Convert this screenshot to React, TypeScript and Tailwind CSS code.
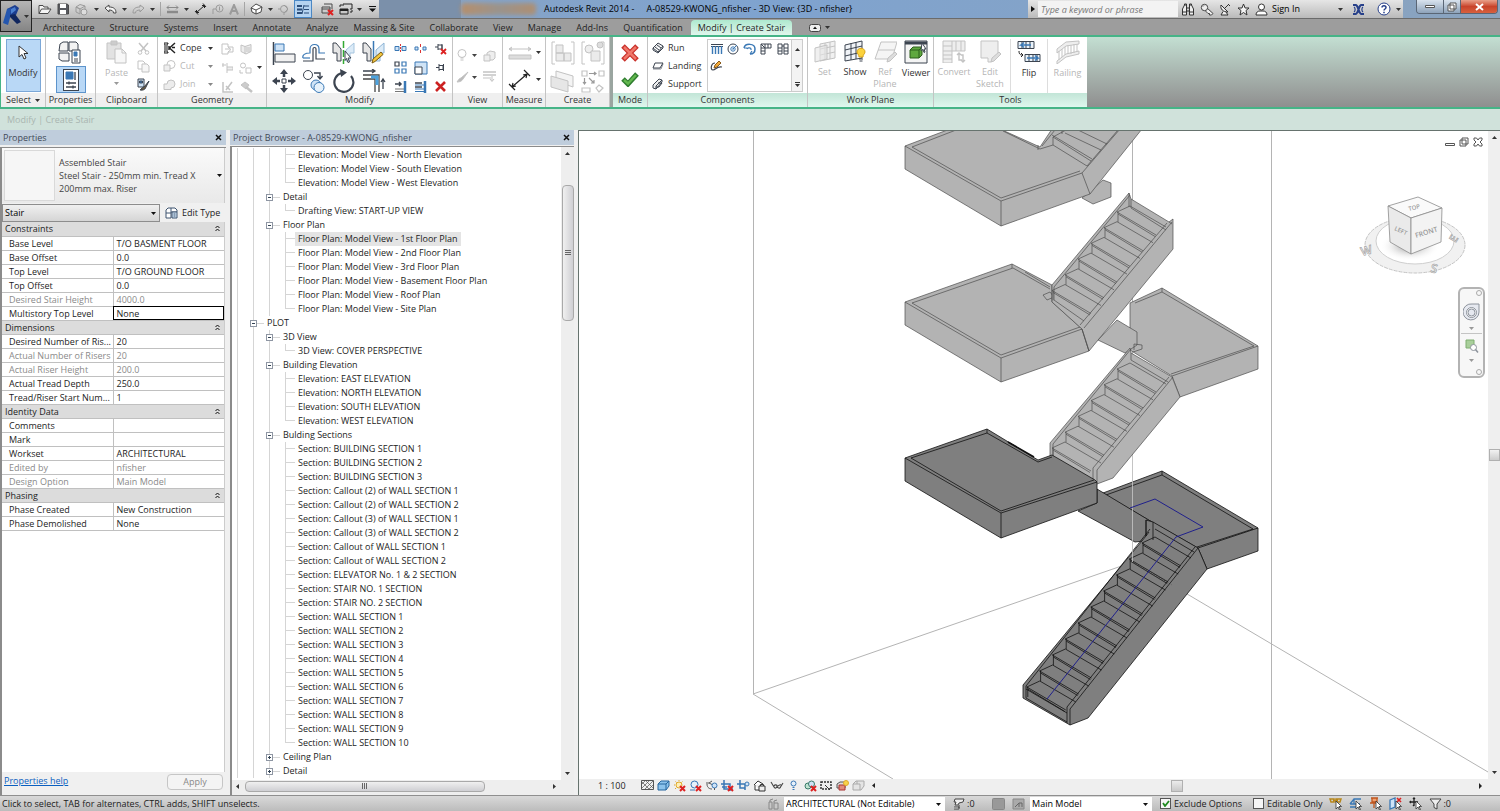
import { Fragment, useState } from "react";
import type { ReactNode } from "react";
import clsx from "clsx";

const INK = "#3c4450";
const GHOST = "#c3c3c3";
const BLUE = "#3a78b5";

type IcoProps = { w: number; h: number; c?: string; sw?: number; children: ReactNode };

function Ico({ w, h, c = INK, sw = 1, children }: IcoProps) {
  return (
    <svg width={w} height={h} viewBox={`0 0 ${w} ${h}`} fill="none" stroke={c} strokeWidth={sw} className="shrink-0" aria-hidden="true">
      {children}
    </svg>
  );
}

function Caret({ c = "#333" }: { c?: string }) {
  return (
    <Ico w={5} h={3} c="none">
      <path d="M0 0h5L2.5 3z" fill={c} />
    </Ico>
  );
}

function IconButton({ label, className, children }: { label: string; className?: string; children: ReactNode }) {
  return (
    <button type="button" aria-label={label} className={clsx("flex items-center justify-center", className)}>
      {children}
    </button>
  );
}

/* ---------- quick access toolbar ---------- */

const dark = "#4a4a4a";
const pale = "#9b9b9b";

function QuickAccess() {
  return (
    <div className="flex h-[18px] items-center gap-[5px] bg-gradient-to-b from-[#e6e6e6] to-[#b9b9b9] pl-[6px] pr-[3px]">
      <IconButton label="Open">
        <Ico w={14} h={11} c={dark}><path d="M1 9.500V1.500h4l1 1.500h4v2M1 9.500l2.500-4.500H13l-3 4.500z" fill="#f4f4f4" /></Ico>
      </IconButton>
      <IconButton label="Save">
        <Ico w={13} h={12} c={dark}><path d="M1 1h9l1.500 1v9H1z" fill="#57595e" /><path d="M3 1h6v4H3zM3 7h6v4H3z" fill="#fff" stroke="none" /></Ico>
      </IconButton>
      <IconButton label="Synchronize" className="gap-[5px]">
        <Ico w={14} h={13} c={pale}><path d="M1 4l4-2.500 5 1.500v3M1 4v5l4 2V6zl4 2 5-3" /><circle cx="9" cy="9" r="3" fill="#ddd" /></Ico>
        <Caret />
      </IconButton>
      <IconButton label="Undo" className="gap-[5px]">
        <Ico w={13} h={10} c={dark}><path d="M1 4l4-3v2c5 0 7 2 7 6H9.500c0-2-1.500-3-4.500-3v2z" fill="#f2f2f2" /></Ico>
        <Caret />
      </IconButton>
      <IconButton label="Redo" className="gap-[5px]">
        <Ico w={13} h={10} c={pale}><path d="M12 4L8 1v2C3 3 1 5 1 9h2.500C3.500 7 5 6 8 6v2z" /></Ico>
        <Caret />
      </IconButton>
      <span className="h-[14px] w-px bg-[#a5a5a5]" />
      <IconButton label="Measure between references" className="gap-[5px]">
        <Ico w={13} h={9} c="#8a8a8a"><path d="M1 2.500h11M3 .5l-2 2 2 2M10 .5l2 2-2 2" /><path d="M1 7h11" strokeWidth="2.500" /></Ico>
        <Caret />
      </IconButton>
      <IconButton label="Aligned dimension">
        <Ico w={13} h={12} c="#222"><path d="M2.500 9.500l8-7M1 8l3 3.500M9 .5L12 4M2.500 9.500V7M2.500 9.500H5M10.500 2.500H8M10.500 2.500V5" /></Ico>
      </IconButton>
      <IconButton label="Tag by category">
        <Ico w={12} h={11} c={pale}><path d="M1 10V5h3" /><circle cx="7.500" cy="4.500" r="3.500" /><path d="M7.500 2.500v4" /></Ico>
      </IconButton>
      <IconButton label="Text">
        <Ico w={10} h={11} c={pale} sw={2}><path d="M1 10.500L5 1l4 9.500M2.500 7h5" /></Ico>
      </IconButton>
      <span className="h-[14px] w-px bg-[#a5a5a5]" />
      <IconButton label="Default 3D view" className="gap-[5px]">
        <Ico w={13} h={12} c={dark}><path d="M1 5l5-4 6 3-1 5-5 2-4-2z" fill="#fff" /><path d="M1 5l5 2 6-3M6 7v4" /></Ico>
        <Caret />
      </IconButton>
      <IconButton label="Section">
        <Ico w={11} h={11} c={pale}><circle cx="6" cy="5" r="3.500" /><path d="M6 1l4 4-4 4v2M0 5h2" /></Ico>
      </IconButton>
      <IconButton label="Thin lines" className="h-[18px] w-[18px] border border-[#4a87c4] bg-[#b5d3f0]">
        <Ico w={12} h={11} c="#2b4d78"><path d="M0 2h5M0 5.500h5M0 9h5" strokeWidth="2" /><path d="M7 2h5M7 5.500h5M7 9h5M7 1l-2 9" /></Ico>
      </IconButton>
      <IconButton label="Close hidden windows" className="ml-[4px]">
        <Ico w={13} h={13} c={dark}><path d="M3 1h8v5M1 4h8v6H1zM1 6h8" /><path d="M7 7l5 5M12 7l-5 5" stroke="#d22" strokeWidth="2" /></Ico>
      </IconButton>
      <IconButton label="Switch windows" className="gap-[4px]">
        <Ico w={14} h={12} c="#222"><path d="M4 3V1h9v5h-2M1 6h8v5H1zM1 4V2h2M11 9h2V7" /><path d="M1 7h8" strokeWidth="2" /></Ico>
        <Caret />
      </IconButton>
      <IconButton label="Customize quick access toolbar" className="ml-[2px]">
        <Ico w={7} h={7} c="#111"><path d="M0 .5h7" /><path d="M0 2.500h7L3.500 6z" fill="#111" stroke="none" /></Ico>
      </IconButton>
    </div>
  );
}

function TitleBar() {
  return (
    <div className="flex h-[19px] items-start border-b border-[#6b6b6b] bg-gradient-to-r from-[#8fa4bb] via-[#7fa3cf] to-[#8aa3be]">
      <QuickAccess />
      <div className="h-[18px] w-[82px] bg-[#7b90aa]" />
      <div className="h-[12px] w-[75px] self-center rounded bg-gradient-to-r from-[#b58f6c] via-[#9a938c] to-[#ad8f73] blur-[2px]" />
      <h1 className="flex flex-1 items-center gap-3 self-center whitespace-nowrap pl-2 font-normal text-black">
        <span>Autodesk Revit 2014 -</span>
        <span>A-08529-KWONG_nfisher - 3D View: {"{3D - nfisher}"}</span>
      </h1>
      <div className="flex h-[18px] items-center bg-gradient-to-b from-[#e6e6e6] to-[#bababa]">
        <IconButton label="Collapse search" className="w-[10px]">
          <Ico w={4} h={6} c="none"><path d="M0 0v6l4-3z" fill="#111" /></Ico>
        </IconButton>
        <input
          type="text"
          aria-label="Search help"
          placeholder="Type a keyword or phrase"
          className="h-[16px] w-[140px] bg-[#f3f3f3] px-[3px] italic placeholder:text-[#777]"
        />
        <div className="flex items-center gap-[5px] pl-[3px]">
          <IconButton label="Search">
            <Ico w={14} h={13} c="#333"><path d="M1.500 12V6l2-4h2v10zM8.500 12V2h2l2 4v6zM5.500 5h3M5.500 8h3M1.500 9h4M8.500 9h4M3.500 2V1h2v1M8.500 2V1h2v1" fill="#eee" /></Ico>
          </IconButton>
          <IconButton label="Subscription center">
            <Ico w={14} h={13} c="#444"><path d="M6 4l7 6.500-1.500 1.500h-2V10.500H8L4.500 7" fill="#eee" /><circle cx="4.500" cy="4.500" r="3.200" fill="#eee" /><path d="M3 3.500l1-1" /></Ico>
          </IconButton>
          <IconButton label="Communication center">
            <Ico w={13} h={13} c="#333"><path d="M2 2c-1 4 2 7 7 7zM5.500 5.500L9 2M9 1l2 2M4 8.500L2 12h7L7 9" fill="#eee" /></Ico>
          </IconButton>
          <IconButton label="Favorites">
            <Ico w={13} h={13} c="#333"><path d="M6.500 1l1.600 4H12L9 7.500l1 4.500-3.500-2.500L3 12l1-4.500L1 5h4z" fill="#f4f4f4" /></Ico>
          </IconButton>
          <button type="button" className="flex w-[88px] items-center gap-1 text-black">
            <Ico w={13} h={13} c="#333"><circle cx="6.500" cy="4" r="3" fill="#fff" /><path d="M1 12c0-3 2-4 4-4h3c2 0 4 1 4 4z" fill="#fff" /></Ico>
            <span className="flex-1 text-left">Sign In</span>
            <Caret />
          </button>
          <IconButton label="Exchange apps" className="w-[20px]">
            <Ico w={13} h={11} c="#27408a" sw={2.2}><path d="M1 1h2.500c3 0 3 9 6 9H12M12 1H9.500c-3 0-3 9-6 9H1" /><path d="M2 3c1.500 1 1.500 4 0 5M11 3c-1.500 1-1.500 4 0 5" strokeWidth="1.200" /></Ico>
          </IconButton>
          <IconButton label="Help" className="gap-[5px] pl-[4px] pr-[2px]">
            <Ico w={14} h={14} c="#27408a"><circle cx="7" cy="7" r="6" fill="#fff" /><path d="M5 5.500c0-2.500 4-2.500 4 0C9 7 7 7 7 8.500M7 9.800v1.400" strokeWidth="1.500" /></Ico>
            <Caret />
          </IconButton>
        </div>
      </div>
      <div className="ml-[13px] mr-[2px] flex h-[14px] overflow-hidden rounded-b-sm border border-t-0 border-[#5a6675] text-white">
        <IconButton label="Minimize" className="w-[26px] bg-gradient-to-b from-[#d9e3ee] to-[#8ea3ba]">
          <Ico w={10} h={4} c="#555"><path d="M.5.5h9v2h-9z" fill="#fff" /></Ico>
        </IconButton>
        <IconButton label="Restore" className="w-[18px] border-x border-[#5a6675] bg-gradient-to-b from-[#d9e3ee] to-[#8ea3ba]">
          <Ico w={10} h={10} c="#555"><path d="M3 1h6v6H3zM1 3h6v6H1z" fill="#fff" /></Ico>
        </IconButton>
        <IconButton label="Close" className="w-[36px] bg-gradient-to-b from-[#e8a08a] via-[#c8432a] to-[#d8603e]">
          <Ico w={9} h={8} c="#fff" sw={2}><path d="M1 1l7 6M8 1L1 7" /></Ico>
        </IconButton>
      </div>
    </div>
  );
}

const tabs = [
  "Architecture", "Structure", "Systems", "Insert", "Annotate", "Analyze", "Massing & Site",
  "Collaborate", "View", "Manage", "Add-Ins", "Quantification", "Modify | Create Stair",
];

function TabBar({ active, onSelect }: { active: string; onSelect: (t: string) => void }) {
  return (
    <nav className="flex h-[16px] items-end gap-px bg-[#9d9d9d] pl-[4px] text-[#1f1f1f]">
      {tabs.map((t) => (
        <button
          key={t}
          type="button"
          onClick={() => onSelect(t)}
          className={clsx(
            "h-[15px] px-[7px] leading-[15px]",
            t === active && "rounded-t-sm bg-gradient-to-b from-[#aee9cf] to-[#e0f5ec]"
          )}
        >
          {t}
        </button>
      ))}
      <IconButton label="Minimize ribbon" className="ml-[16px] h-[15px] gap-1">
        <Ico w={12} h={8} c="#444"><rect x=".5" y=".5" width="11" height="7" rx="2" fill="#eee" /><path d="M4 5h4L6 2.500z" fill="#111" stroke="none" /></Ico>
        <Caret />
      </IconButton>
    </nav>
  );
}

/* ---------- ribbon ---------- */

type PanelProps = { label: ReactNode; className: string; tint?: boolean; body?: string; children: ReactNode };

function Panel({ label, className, tint, body, children }: PanelProps) {
  return (
    <section className={clsx("flex shrink-0 flex-col border-r border-[#c4c4c4] bg-white", className)}>
      <div className={clsx("flex min-h-0 flex-1 justify-center pt-[2px]", body)}>{children}</div>
      <div
        className={clsx(
          "flex h-[14px] items-center justify-center gap-1 text-[#333]",
          tint ? "bg-gradient-to-b from-[#c2e5d7] to-[#dff7ee]" : "bg-[#efefef]"
        )}
      >
        {label}
      </div>
    </section>
  );
}

function BigTool({ label, ghost, arrow, className, children }: { label: string; ghost?: boolean; arrow?: boolean; className?: string; children: ReactNode }) {
  return (
    <button
      type="button"
      disabled={ghost}
      className={clsx("flex flex-col items-center gap-[3px] pt-[1px] leading-[12px]", ghost ? "text-[#b6b6b6]" : "text-[#333]", className)}
    >
      {children}
      <span>{label}</span>
      {arrow && <Caret c="#999" />}
    </button>
  );
}

function TextTool({ label, ghost, arrow, children }: { label: string; ghost?: boolean; arrow?: boolean; children: ReactNode }) {
  return (
    <button
      type="button"
      disabled={ghost}
      className={clsx("flex h-[19px] items-center gap-1 text-left", ghost ? "text-[#b6b6b6]" : "text-[#333]")}
    >
      {children}
      <span className="flex-1">{label}</span>
      {arrow && <Caret c={ghost ? "#888" : "#333"} />}
    </button>
  );
}

function Cell({ label, w = "w-[20px]", h = "h-[19px]", children }: { label: string; w?: string; h?: string; children: ReactNode }) {
  return <IconButton label={label} className={clsx(w, h)}>{children}</IconButton>;
}

function PropertiesGlyph() {
  return (
    <Ico w={16} h={22}>
      <rect x=".5" y=".5" width="15" height="21" fill="#fff" />
      <path d="M3 3h7v7H3z" fill={BLUE} stroke={BLUE} />
      <path d="M12 3v8M3 14h10M3 18h10M6 12.500v3M10 16.500v3" strokeWidth="1.300" />
    </Ico>
  );
}

function ClipboardPanel() {
  return (
    <Panel label="Clipboard" className="w-[62px]" body="gap-[6px]">
      <BigTool label="Paste" ghost arrow className="w-[28px]">
        <Ico w={21} h={24} c={GHOST}>
          <path d="M1 3h14v16H1z" fill="#e2e2e2" /><path d="M5 1h6v4H5z" fill="#ccc" />
          <path d="M9 9h7l4 4v10H9z" fill="#f7f7f7" /><path d="M16 9v4h4" />
        </Ico>
      </BigTool>
      <div className="flex flex-col">
        <Cell label="Cut to clipboard" w="w-[14px]"><Ico w={13} h={13} c={GHOST}><path d="M2 1l7 8M11 1L4 9" strokeWidth="1.500" /><circle cx="3" cy="10.500" r="1.800" /><circle cx="10" cy="10.500" r="1.800" /></Ico></Cell>
        <Cell label="Copy to clipboard" w="w-[14px]"><Ico w={13} h={13} c={GHOST}><path d="M1 1h5l2 2v6H1z" /><path d="M5 4h5l2 2v6H5z" fill="#f6f6f6" /></Ico></Cell>
        <Cell label="Match type properties" w="w-[14px]"><Ico w={13} h={13}><path d="M1 1h6v8H1z" fill="#cfe3f6" /><path d="M2.500 3h3v2h-3z" fill={BLUE} /><path d="M12 3L7 9c-1 0-3 2-4 3 3 .5 5-.5 5.500-2z" fill="#6b5a3e" /></Ico></Cell>
      </div>
    </Panel>
  );
}

function GeometryPanel() {
  return (
    <Panel label="Geometry" className="w-[109px]" body="gap-[4px]">
      <div className="flex w-[50px] flex-col">
        <TextTool label="Cope" arrow>
          <Ico w={13} h={12} c="#222"><path d="M1 1h4v1H4v8h1v1H1M1 2h1v8H1" fill="#eee" /><path d="M12 1L6.500 6 12 11M6 4v4M9 5.500h3" strokeWidth="1.400" /></Ico>
        </TextTool>
        <TextTool label="Cut" arrow ghost>
          <Ico w={13} h={12} c={GHOST}><circle cx="8" cy="4.500" r="4" /><path d="M1 5h6v6H1z" fill="#eee" /></Ico>
        </TextTool>
        <TextTool label="Join" arrow ghost>
          <Ico w={13} h={12} c={GHOST}><path d="M1 6h3a4 4 0 1 1 4 4v1.500H1z" fill="#ececec" /></Ico>
        </TextTool>
      </div>
      <div className="grid grid-cols-[20px_24px] content-start">
        <Cell label="Split face"><Ico w={13} h={12} c={GHOST}><path d="M1 1h6v3h5v5H7v2H1zM4 6h5M7 4l3 2.500L7 9" /></Ico></Cell>
        <Cell label="Paint" w="w-[18px]"><Ico w={12} h={12} c={GHOST}><path d="M1 2l4 1.500 6-2v7L6 11 1 8.500zM5 3.500V11M7 4v5M9 4v5" fill="#eee" /></Ico></Cell>
        <Cell label="Wall joins"><Ico w={12} h={12} c={GHOST}><path d="M2 1v4M6 1v10M1 3h4M6 5h6v3H6" fill="#eee" /></Ico></Cell>
        <div className="flex h-[19px] items-center gap-[5px] pl-[2px]">
          <Ico w={13} h={12} c={GHOST}><circle cx="4" cy="3.500" r="2.500" /><path d="M7 6h5v5H7zM1 8v3h3" /></Ico>
          <Caret />
        </div>
        <Cell label="Beam joins"><Ico w={13} h={12} c={GHOST}><path d="M2 1v10h10M5 9l6-8M5 5l4 4" strokeWidth="1.500" /></Ico></Cell>
        <Cell label="Demolish" w="w-[18px]"><Ico w={13} h={12} c={GHOST}><path d="M1 4l4-3 4 3-3 4z" fill="#ccc" /><path d="M6 6l6 5" strokeWidth="2.500" /></Ico></Cell>
      </div>
    </Panel>
  );
}

function ModifyPanel() {
  return (
    <Panel label="Modify" className="w-[186px]" body="gap-[2px]">
      <div className="grid grid-cols-4 content-start">
        <Cell label="Align" w="w-[30px]" h="h-[28px]"><Ico w={24} h={23}><path d="M1.500 0v23" strokeWidth="1.500" /><path d="M3 2h9v7H3z" fill="#cfe3f6" stroke={BLUE} /><path d="M3 12h20v8H3z" fill="#f1f1f1" /></Ico></Cell>
        <Cell label="Offset" w="w-[30px]" h="h-[28px]"><Ico w={24} h={20} sw={1.2}><path d="M1 15c-1-3 2-5 7-5V6c0-6 9-6 9 0v4h6" stroke={BLUE} /><path d="M1 18h10V6c0-2 3-2 3 0v10h9" /><path d="M1 15h7" stroke={BLUE} /></Ico></Cell>
        <Cell label="Mirror, pick axis" w="w-[30px]" h="h-[28px]"><Ico w={23} h={24}><path d="M1 2h3l5 6v12H5V12H1z" fill="#e6e6e6" /><path d="M11.500 0v23" stroke="#3a3" strokeDasharray="7 2" strokeWidth="1.500" /><path d="M22 2l-8 7v11h4V12h4z" fill="#dcebf7" stroke="#a5c4de" /><path d="M13 10l6 7h-3l1.500 4-1.500.5-1.500-4-1.500 2z" fill="#fff" /></Ico></Cell>
        <Cell label="Mirror, draw axis" w="w-[30px]" h="h-[28px]"><Ico w={23} h={24}><path d="M1 2h3l5 6v12H5V12H1z" fill="#e6e6e6" /><path d="M11.500 0v21" stroke={BLUE} strokeWidth="1.500" /><path d="M22 2l-8 7v11h4V12h4z" fill="#dcebf7" stroke="#8db4d6" /><path d="M10 22l1-4L19 11l2 2.500-8 7z" fill="#f3c63d" stroke="#7a5a12" /></Ico></Cell>
        <Cell label="Move" w="w-[30px]" h="h-[28px]"><Ico w={24} h={24}><path d="M12 0l4 5H8zM12 24l4-5H8zM0 12l5-4v8zM24 12l-5-4v8z" fill={INK} stroke="none" /><path d="M12 4v4M12 16v4M4 12h4M16 12h4" strokeWidth="2.500" /><path d="M10 10h4v4h-4z" /></Ico></Cell>
        <Cell label="Copy" w="w-[30px]" h="h-[28px]"><Ico w={23} h={23}><circle cx="6" cy="5" r="4.500" fill="#fff" /><path d="M12 3h6v5M15.500 6l2.500 3 2.500-3" strokeWidth="1.400" /><circle cx="14" cy="15" r="5" fill="#cfe3f6" stroke={BLUE} /><circle cx="17" cy="17.500" r="5" fill="#e5f1fb" stroke={BLUE} /></Ico></Cell>
        <Cell label="Rotate" w="w-[30px]" h="h-[28px]"><Ico w={24} h={24} sw={2.2}><path d="M10 4a9.500 9.500 0 1 0 9 3" /><path d="M8 0l7 3.500L9 8z" fill={INK} stroke="none" /></Ico></Cell>
        <Cell label="Trim or extend to corner" w="w-[30px]" h="h-[28px]"><Ico w={24} h={24} sw={1.3}><path d="M1 2h12M10 0l3 2-3 2M21 20V10M19 13l2-3 2 3" /><path d="M1 6h16v17M1 10h12v13" stroke="#444" /><path d="M9 8h6v8" stroke="#4da3df" strokeWidth="3" /></Ico></Cell>
      </div>
      <div className="grid grid-cols-3 content-start">
        <Cell label="Split element"><Ico w={13} h={9} c={BLUE}><path d="M1 2.500h4v4H1zM8 2.500h4v4H8z" fill="#cfe3f6" /><path d="M6.500 0v9" stroke="#d33" strokeDasharray="2 1" /></Ico></Cell>
        <Cell label="Split with gap"><Ico w={13} h={9} c={BLUE}><path d="M1 3h3v3H1zM9 3h3v3H9z" fill="#cfe3f6" /><path d="M6.500 0v3M6.500 6v3" stroke="#d33" /></Ico></Cell>
        <Cell label="Unpin"><Ico w={13} h={12}><path d="M1 4h3M4 1v6M4 2h4v4H4M8 1v6" /><path d="M7 6l5 5M12 6l-5 5" stroke="#d22" strokeWidth="1.800" /></Ico></Cell>
        <Cell label="Array"><Ico w={14} h={14} sw={1.2}><path d="M1 1h4v4H1z" /><path d="M8 1h4v4H8zM1 8h4v4H1zM8 8h4v4H8z" stroke={BLUE} /></Ico></Cell>
        <Cell label="Scale"><Ico w={14} h={14} c={BLUE}><path d="M1 1h12v12H1z" fill="#cfe3f6" /><path d="M1 6h7v7H1z" fill="#fff" stroke={INK} /></Ico></Cell>
        <Cell label="Pin"><Ico w={11} h={9}><path d="M1 4.500h3M4 1v7M4 2.500h4v4H4M8.500 1v7" /></Ico></Cell>
        <Cell label="Trim single element"><Ico w={14} h={12}><path d="M1 3h6M5 1l2 2-2 2" strokeWidth="1.500" /><path d="M1 8h9M1 10.500h9" stroke="#777" /><path d="M11 0v12" stroke={BLUE} strokeWidth="2.500" /></Ico></Cell>
        <Cell label="Trim multiple elements"><Ico w={14} h={12}><path d="M1 2h7M1 6h7" strokeWidth="1.500" /><path d="M1 4h9M1 10.500h9M1 8h9" stroke={BLUE} /><path d="M11 0v12" stroke={BLUE} strokeWidth="2.500" /></Ico></Cell>
        <Cell label="Delete"><Ico w={11} h={11} c="#c22" sw={2.6}><path d="M1 1l9 9M10 1l-9 9" /></Ico></Cell>
      </div>
    </Panel>
  );
}

function CreatePanel() {
  const box = <path d="M4 1H1v22h3M20 1h3v22h-3" />;
  return (
    <Panel label="Create" className="w-[64px]" body="">
      <div className="grid grid-cols-2 content-start">
        <Cell label="Create assembly" w="w-[30px]" h="h-[28px]"><Ico w={24} h={24} c={GHOST}>{box}<path d="M5 4h7v8H5zM5 12h8v8H5zM13 12h7v8h-7z" fill="#ebebeb" /></Ico></Cell>
        <Cell label="Create parts" w="w-[30px]" h="h-[28px]"><Ico w={24} h={24} c={GHOST}>{box}<circle cx="8" cy="8" r="4" fill="#eee" /><path d="M10 10h9v10h-9z" fill="#ebebeb" /><circle cx="19" cy="4" r="3" fill="#ddd" /></Ico></Cell>
        <Cell label="Create group" w="w-[30px]" h="h-[28px]"><Ico w={25} h={23} c={GHOST}><path d="M6 1l17 5v11L6 11z" fill="#f4f4f4" /><path d="M1 6l17 5v11L1 17z" fill="#e6e6e6" /></Ico></Cell>
        <Cell label="Create similar" w="w-[30px]" h="h-[28px]"><Ico w={24} h={23} c={GHOST} sw={1.2}><path d="M1 1h5v5H1zM18 1h5v5h-5zM1 18h8v4H1zM18 15l4 3-4 4-3-4z" /><path d="M8 3.500h7M13 2l2 1.500L13 5M3.500 8v6M2 12l1.500 2L5 12M8 8l5 5M13 10v3h-3" stroke="#999" /></Ico></Cell>
      </div>
    </Panel>
  );
}

function ComponentsPanel() {
  return (
    <Panel label="Components" tint className="w-[160px]" body="gap-[4px] px-[4px]">
      <div className="flex w-[51px] flex-col">
        <TextTool label="Run"><Ico w={12} h={12}><path d="M1 6l5-5 5 3-5 6zM3 5l4 3M5 3l4 3M1 6v2l5 3 5-5V4" fill="#eee" /></Ico></TextTool>
        <TextTool label="Landing"><Ico w={12} h={8}><path d="M3 1h8L8 6H1z" fill="#fff" /><path d="M1 7h8l2-5" strokeWidth=".6" /></Ico></TextTool>
        <TextTool label="Support"><Ico w={12} h={12}><path d="M1 7l6-6 3 1v2L4 11 1 10zM4 11V8l6-6M6 5h4l-3 4H4" fill="#eee" /></Ico></TextTool>
      </div>
      <div className="mb-[1px] flex flex-1 border border-[#ccc]">
        <div className="grid flex-1 auto-rows-[17px] grid-cols-5 content-start">
          <Cell label="Straight" w="w-[17px]" h="h-[17px]"><Ico w={12} h={11}><path d="M0 1.500h12M0 3.500h12" /><path d="M1.500 3v8M4.500 3v8M7.500 3v8M10.500 3v8" stroke={BLUE} strokeWidth="1.400" /></Ico></Cell>
          <Cell label="Full-step spiral" w="w-[17px]" h="h-[17px]"><Ico w={12} h={12}><circle cx="6" cy="6" r="5" /><circle cx="6" cy="6" r="2.200" stroke={BLUE} /><circle cx="6" cy="6" r=".8" fill={BLUE} stroke="none" /><path d="M6 6l4-4" stroke={BLUE} /></Ico></Cell>
          <Cell label="Center-ends spiral" w="w-[17px]" h="h-[17px]"><Ico w={13} h={12} c={BLUE} sw={1.500}><path d="M1 5c1-5 11-5 11 1 0 3-2 5-5 5" /><path d="M4 6c1-2 4-1 4 0v1M1 5h3M7 11l2-3" strokeWidth="1.200" /></Ico></Cell>
          <Cell label="L-shape winder" w="w-[17px]" h="h-[17px]"><Ico w={12} h={12}><path d="M1 11V1h10v4H5v6zM1 8h4M1 5h4M5 5L1 1M5 5V1M8 1v4" /></Ico></Cell>
          <Cell label="U-shape winder" w="w-[17px]" h="h-[17px]"><Ico w={12} h={12}><path d="M1 11V1h4v10zM7 11V1h4v10zM1 8h4M1 5h4M7 8h4M7 5h4M5 3h2" /></Ico></Cell>
          <Cell label="Create sketch" w="w-[17px]" h="h-[17px]"><Ico w={13} h={12}><path d="M5 3C1 3 0 10 3 10s3-4 9-3" strokeWidth="1.200" /><path d="M4 8l1-3 4-4 2 2-4 4z" fill="#f0a93a" stroke="#8a5a1a" /></Ico></Cell>
        </div>
        <div className="flex w-[11px] flex-col items-center justify-between border-l border-[#ccc] bg-[#f3f3f3] pb-1 pt-2">
          <span className="rotate-180"><Caret /></span>
          <Caret />
          <span className="flex flex-col gap-px"><span className="h-px bg-[#333]" /><Caret /></span>
        </div>
      </div>
    </Panel>
  );
}

function WorkPlanePanel() {
  return (
    <Panel label="Work Plane" tint className="w-[126px]" body="">
      <BigTool label="Set" ghost className="w-[31px]"><Ico w={22} h={23} c={GHOST}><path d="M6 4l15-3v17L6 21zM6 9l15-3M6 15l15-3M11 3v17M16 2v17" fill="#f1f1f1" /><path d="M1 8l12-3v14L1 22z" fill="#e6e6e6" fillOpacity=".6" /></Ico></BigTool>
      <BigTool label="Show" className="w-[30px]"><Ico w={22} h={23}><path d="M1 5l17-4v17L1 21zM1 10l17-4M1 16l17-4M7 3v17M12 2v17" fill="#f1f4f8" /><path d="M13 12c0-5 8-5 8 0 0 2-2 2-2 5h-4c0-3-2-3-2-5z" fill="#fbd23c" stroke="#d8a31a" /><path d="M15 19h4M15.500 21h3" /></Ico></BigTool>
      <BigTool label="Ref Plane" ghost className="w-[30px]"><Ico w={23} h={23} c={GHOST}><path d="M7 2h16l-5 17H1zM4 10h17" fill="#f5f5f5" /><path d="M13 22l1-4 7-6 2 2-7 7z" fill="#ddd" /></Ico></BigTool>
      <BigTool label="Viewer" className="w-[32px]"><Ico w={24} h={24}><path d="M1 1h22v22H1z" fill="#f4f4f4" /><path d="M1 3h22" strokeWidth="3" /><path d="M6 10l3-3h9v8l-3 3H6zM6 10h9v8M15 10l3-3" fill="#5fa83f" stroke="#2d5f1c" /><path d="M18 3l4 6h-2l1 3-1 .5-1-3-2 1z" fill="#fff" /></Ico></BigTool>
    </Panel>
  );
}

function ToolsPanel() {
  return (
    <Panel label="Tools" tint className="w-[153px] border-r-0" body="">
      <BigTool label="Convert" ghost className="w-[40px]"><Ico w={24} h={23} c={GHOST}><path d="M1 1h22v10H10v12H1zM10 1v10M14 1v10M19 1v10M1 6h9M1 11h9M1 15h9M1 19h9" fill="#eee" /><path d="M15 15l2-2 2 2M17 14v6h3M23 20l-2 2-2-2M21 21v-6h-2" strokeWidth="1.400" /></Ico></BigTool>
      <BigTool label="Edit Sketch" ghost className="mr-[4px] w-[32px]"><Ico w={21} h={23} c={GHOST}><path d="M1 1h17v14L11 22H8v-4H1z" fill="#eee" /><path d="M11 22l1-4 7-6 2 2-7 7z" fill="#ddd" /></Ico></BigTool>
      <BigTool label="Flip" className="w-[37px] border-l border-[#ddd]"><Ico w={24} h={24} c={BLUE}><path d="M1 1.500h16v7H1zM5 1v8M9 1v8M13 1v8M8 14.500h15v7H8zM12 14v8M16 14v8M20 14v8" fill="#e9f2fa" stroke={INK} /><path d="M14 5H4l3-2.500M4 5l3 2.500M10 18h11l-3-2.500M21 18l-3 2.500" strokeWidth="1.500" /><path d="M2 11c0 4 2 4 4 4M4 13l2 2-2 2" stroke="#222" /></Ico></BigTool>
      <BigTool label="Railing" ghost className="w-[40px] border-l border-[#ddd]"><Ico w={24} h={24} c={GHOST}><path d="M1 9l9-7 13-1v3l-13 2-9 7zM1 21l9-7 13-3v3l-13 3-9 7zM3 11v9M6 9v8M9 7v8M12 5v9M15 5v9M18 4v9M21 4v8" fill="#eee" /></Ico></BigTool>
    </Panel>
  );
}

function Ribbon() {
  return (
    <div className="flex h-[74px] border-y-2 border-l border-[#46b487] bg-gradient-to-b from-[#c3dfd2] to-[#8f8f8f]">
      <Panel label={<>Select <Caret /></>} className="w-[45px]">
        <button type="button" className="mb-px flex w-[35px] flex-col items-center gap-[6px] border border-[#7ba7d7] bg-[#b9d8f6] pt-[5px] leading-[12px] text-[#333]">
          <Ico w={11} h={16} c="#333"><path d="M1 1v11l3-2.500L6 14l2-1-2-4.500h4z" fill="#fff" /></Ico>
          Modify
        </button>
      </Panel>
      <Panel label="Properties" className="w-[50px]">
        <div className="flex flex-col">
          <IconButton label="Type properties" className="h-[27px] w-[30px]">
            <Ico w={25} h={24}>
              <path d="M2 3l3-2h5v9H1zM11 1h7l2 2v7h-9zM1 12h10v8H4l-3-2z" fill="#f3f3f3" />
              <path d="M14 9h8v13h-8z" fill="#fff" /><path d="M16 11h3v4h-3z" fill={BLUE} stroke={BLUE} /><path d="M16 18h4M16 20h4" />
            </Ico>
          </IconButton>
          <IconButton label="Properties palette" className="h-[27px] w-[30px] border border-[#5d94cc] bg-[#b9d8f6]">
            <PropertiesGlyph />
          </IconButton>
        </div>
      </Panel>
      <ClipboardPanel />
      <GeometryPanel />
      <ModifyPanel />
      <Panel label="View" className="w-[50px]" body="">
        <div className="grid grid-cols-[24px_22px] content-center gap-y-[2px]">
          <Cell label="Hide in view" w="w-[24px]"><Ico w={21} h={13} c={GHOST}><circle cx="6" cy="4.500" r="4" /><path d="M4.500 9h3M4.500 11h3" /><path d="M16 5h5l-2.500 3z" fill="#444" stroke="none" /></Ico></Cell>
          <Cell label="Displace elements" w="w-[22px]"><Ico w={13} h={12} c={GHOST}><path d="M1 5h6v6H1zM4 5V3l3-2 5 1v6l-2 2H7" fill="#eee" /></Ico></Cell>
          <Cell label="Override graphics" w="w-[24px]"><Ico w={21} h={12} c={GHOST}><path d="M12 1L5 7c-2 0-3 3-4 4 3 0 5-1 6-3z" fill="#bbb" /><path d="M16 5h5l-2.500 3z" fill="#444" stroke="none" /></Ico></Cell>
          <Cell label="Linework" w="w-[22px]"><Ico w={13} h={11} c={GHOST}><path d="M0 1h13M0 4h13" strokeWidth="1.500" /><path d="M0 7h8M9 5v5M7 8l2 2.500L11 8" /></Ico></Cell>
        </div>
      </Panel>
      <Panel label="Measure" className="w-[43px]" body="">
        <div className="flex flex-col">
          <IconButton label="Measure distance" className="h-[27px] gap-1 px-1">
            <Ico w={24} h={14} c={GHOST}><path d="M1 3h22M4 1L1 3l3 2M20 1l3 2-3 2M1 9h22v4H1z" fill="#ddd" /></Ico><Caret />
          </IconButton>
          <IconButton label="Linear dimension" className="h-[27px] gap-1 px-1">
            <Ico w={24} h={22} c="#222" sw={1.2}><path d="M4 18L19 5M1 15l6 6M16 1l6 6M4 18l1-4M4 18l4-1M19 5l-4 1M19 5l-1 4" /></Ico><Caret />
          </IconButton>
        </div>
      </Panel>
      <CreatePanel />
      <div className="w-[3px] shrink-0 bg-[#9aa5a0]" />
      <Panel label="Mode" tint className="w-[35px]" body="">
        <div className="flex flex-col">
          <IconButton label="Cancel edit mode" className="h-[28px]"><Ico w={18} h={18} c="#c9302a" sw={5}><path d="M2 2l14 14M16 2L2 16" /><path d="M3 3l12 12M15 3L3 15" stroke="#f0776a" strokeWidth="2.500" /></Ico></IconButton>
          <IconButton label="Finish edit mode" className="h-[28px]"><Ico w={18} h={15} c="#2f7d2f" sw={5}><path d="M2 7l5 5 9-10" /><path d="M3 8l4 3.500L15 3" stroke="#63b84f" strokeWidth="2.500" /></Ico></IconButton>
        </div>
      </Panel>
      <ComponentsPanel />
      <WorkPlanePanel />
      <ToolsPanel />
    </div>
  );
}

/* ---------- properties palette ---------- */

type Prop = { name: string; value: string; locked?: boolean; focus?: boolean };

const groups: { title: string; rows: Prop[] }[] = [
  {
    title: "Constraints",
    rows: [
      { name: "Base Level", value: "T/O BASMENT FLOOR" },
      { name: "Base Offset", value: "0.0" },
      { name: "Top Level", value: "T/O GROUND FLOOR" },
      { name: "Top Offset", value: "0.0" },
      { name: "Desired Stair Height", value: "4000.0", locked: true },
      { name: "Multistory Top Level", value: "None", focus: true },
    ],
  },
  {
    title: "Dimensions",
    rows: [
      { name: "Desired Number of Ris...", value: "20" },
      { name: "Actual Number of Risers", value: "20", locked: true },
      { name: "Actual Riser Height", value: "200.0", locked: true },
      { name: "Actual Tread Depth", value: "250.0" },
      { name: "Tread/Riser Start Num...", value: "1" },
    ],
  },
  {
    title: "Identity Data",
    rows: [
      { name: "Comments", value: "" },
      { name: "Mark", value: "" },
      { name: "Workset", value: "ARCHITECTURAL" },
      { name: "Edited by", value: "nfisher", locked: true },
      { name: "Design Option", value: "Main Model", locked: true },
    ],
  },
  {
    title: "Phasing",
    rows: [
      { name: "Phase Created", value: "New Construction" },
      { name: "Phase Demolished", value: "None" },
    ],
  },
];

function PaneHeader({ title }: { title: string }) {
  return (
    <div className="flex h-[15px] shrink-0 items-center justify-between bg-[#bfcddc] pl-[3px] pr-[4px] text-[#3f4a57]">
      <h2 className="font-normal">{title}</h2>
      <IconButton label={`Close ${title}`}>
        <Ico w={7} h={7} c="#111" sw={1.5}><path d="M1 1l5 5M6 1L1 6" /></Ico>
      </IconButton>
    </div>
  );
}

function PropertiesPane() {
  return (
    <aside className="flex w-[226px] shrink-0 flex-col bg-[#f0f0f0]">
      <PaneHeader title="Properties" />
      <div className="mt-[2px] flex flex-1 flex-col border-l-2 border-t border-[#8b8b8b] pr-[1px]">
        <button type="button" className="flex h-[55px] items-center gap-[4px] border-r border-[#ccc] bg-gradient-to-b from-[#fafafa] to-[#e9e9e9] pl-[2px] pr-[2px] text-left leading-[13px] text-[#444]">
          <span className="h-[51px] w-[51px] shrink-0 border border-[#d9d9d9] bg-[#f6f6f6]" />
          <span className="flex-1">Assembled Stair<br />Steel Stair - 250mm min. Tread X<br />200mm max. Riser</span>
          <Caret c="#111" />
        </button>
        <div className="flex h-[19px] items-center gap-[5px]">
          <div className="relative w-[158px]">
            <select aria-label="Element filter" className="h-[18px] w-full appearance-none border border-[#8d8d8d] bg-gradient-to-b from-[#f0f0f0] to-[#d5d5d5] pl-[2px] text-black">
              <option>Stair</option>
            </select>
            <span className="pointer-events-none absolute right-[4px] top-[8px]"><Caret c="#111" /></span>
          </div>
          <button type="button" className="flex items-center gap-1 text-[#222]">
            <Ico w={13} h={12} c="#3f5470"><path d="M1 3l2-2h3v10H1zM1 6h5M6 1h4l2 2v2H6" fill="#fff" /><path d="M7 5h5v6H7z" fill="#cfe3f6" /><path d="M8.500 7h2M8.500 9h2" /></Ico>
            Edit Type
          </button>
        </div>
        <div className="flex-1 border-r border-[#ccc] bg-white">
          <table className="w-full table-fixed border-collapse text-[#1c1c1c]">
            <colgroup><col className="w-[50%]" /><col /></colgroup>
            <tbody>
              {groups.map((g) => (
                <Fragment key={g.title}>
                  <tr className="h-[14px] bg-[#dcdcdc]">
                    <th colSpan={2} className="p-0 pl-[3px] pr-[4px] text-left font-normal leading-[13px]">
                      <button type="button" className="flex w-full items-center justify-between">
                        {g.title}
                        <Ico w={5} h={7} c="#111"><path d="M.5 3l2-2 2 2M.5 6l2-2 2 2" /></Ico>
                      </button>
                    </th>
                  </tr>
                  {g.rows.map((r) => (
                    <tr key={r.name} className={clsx("h-[14px]", r.locked && "text-[#8a8a8a]")}>
                      <th className="truncate border-y border-r border-[#c0c0c0] p-0 pl-[7px] text-left font-normal leading-[13px]">{r.name}</th>
                      <td className={clsx("truncate border border-r-0 border-[#c0c0c0] p-0 pl-[3px] leading-[13px]", r.focus && "outline outline-1 -outline-offset-1 outline-black")}>{r.value}</td>
                    </tr>
                  ))}
                </Fragment>
              ))}
            </tbody>
          </table>
        </div>
        <div className="flex h-[23px] items-start justify-between bg-[#f0f0f0] px-[2px] pt-[2px]">
          <a href="#help" className="text-[#0a5fc0] underline">Properties help</a>
          <button type="button" disabled className="h-[16px] w-[56px] rounded-sm border border-[#c6c6c6] bg-[#f4f4f4] leading-[14px] text-[#888]">Apply</button>
        </div>
      </div>
    </aside>
  );
}

/* ---------- project browser ---------- */

type Node = { level: 1 | 2 | 3; text: string; last?: boolean; open?: boolean; current?: boolean };

const leaves = (texts: string[]): Node[] =>
  texts.map((text, i) => ({ level: 3, text, last: i === texts.length - 1 }));

const group = (text: string, open = true): Node => ({ level: 2, text, open });

const nodes: Node[] = [
  ...leaves(["Elevation: Model View - North Elevation", "Elevation: Model View - South Elevation", "Elevation: Model View - West Elevation"]),
  group("Detail"),
  ...leaves(["Drafting View: START-UP VIEW"]),
  group("Floor Plan"),
  { level: 3, text: "Floor Plan: Model View - 1st Floor Plan", current: true },
  ...leaves([
    "Floor Plan: Model View - 2nd Floor Plan", "Floor Plan: Model View - 3rd Floor Plan",
    "Floor Plan: Model View - Basement Floor Plan", "Floor Plan: Model View - Roof Plan", "Floor Plan: Model View - Site Plan",
  ]),
  { level: 1, text: "PLOT", open: true },
  group("3D View"),
  ...leaves(["3D View: COVER PERSPECTIVE"]),
  group("Building Elevation"),
  ...leaves(["Elevation: EAST ELEVATION", "Elevation: NORTH ELEVATION", "Elevation: SOUTH ELEVATION", "Elevation: WEST ELEVATION"]),
  group("Bulding Sections"),
  ...leaves([
    "Section: BUILDING SECTION 1", "Section: BUILDING SECTION 2", "Section: BUILDING SECTION 3",
    "Section: Callout (2) of WALL SECTION 1", "Section: Callout (2) of WALL SECTION 2",
    "Section: Callout (3) of WALL SECTION 1", "Section: Callout (3) of WALL SECTION 2",
    "Section: Callout of WALL SECTION 1", "Section: Callout of WALL SECTION 2",
    "Section: ELEVATOR No. 1 & 2 SECTION", "Section: STAIR NO. 1 SECTION", "Section: STAIR NO. 2 SECTION",
    "Section: WALL SECTION 1", "Section: WALL SECTION 2", "Section: WALL SECTION 3", "Section: WALL SECTION 4",
    "Section: WALL SECTION 5", "Section: WALL SECTION 6", "Section: WALL SECTION 7", "Section: WALL SECTION 8",
    "Section: WALL SECTION 9", "Section: WALL SECTION 10",
  ]),
  group("Ceiling Plan", false),
  group("Detail", false),
];

function TreeRow({ node, current, onPick }: { node: Node; current: boolean; onPick: () => void }) {
  const rail = "h-full w-4 shrink-0 border-l border-[#d5d5d5]";
  return (
    <li className="flex h-[14px] items-center">
      <span className={rail} />
      {node.level > 1 && <span className={rail} />}
      {node.level > 2 && <span className={rail} />}
      {node.level === 3 ? (
        <span className="flex h-full w-[10px] shrink-0 flex-col">
          <span className="h-[7px] border-b border-l border-[#d5d5d5]" />
          <span className={clsx("flex-1", !node.last && "border-l border-[#d5d5d5]")} />
        </span>
      ) : (
        <span className="flex h-full w-[11px] shrink-0 items-center border-l border-[#d5d5d5]">
          <button type="button" aria-label={`Toggle ${node.text}`} className="-ml-[4px] shrink-0 bg-white">
            <Ico w={7} h={7} c="#8e96a3"><rect x=".5" y=".5" width="6" height="6" fill="#fff" /><path d={node.open ? "M2 3.500h3" : "M2 3.500h3M3.500 2v3"} stroke="#345" /></Ico>
          </button>
          <span className="h-px flex-1 bg-[#d5d5d5]" />
        </span>
      )}
      <button type="button" onClick={onPick} className={clsx("whitespace-nowrap px-[3px] leading-[14px]", current && "bg-[#e4e4e4]")}>
        {node.text}
      </button>
    </li>
  );
}

function BrowserPane() {
  const [picked, setPicked] = useState(() => nodes.findIndex((n) => n.current));
  return (
    <aside className="ml-[4px] flex w-[344px] shrink-0 flex-col bg-[#f0f0f0]">
      <PaneHeader title="Project Browser - A-08529-KWONG_nfisher" />
      <div className="mt-px flex min-h-0 flex-1 flex-col border-l-2 border-t border-[#8b8b8b]">
        <div className="flex min-h-0 flex-1">
          <ul className="min-w-0 flex-1 overflow-hidden bg-white pl-[5px] pt-px text-[#1c1c1c]">
            {nodes.map((n, i) => (
              <TreeRow key={i} node={n} current={i === picked} onPick={() => setPicked(i)} />
            ))}
          </ul>
          <div className="flex w-[13px] shrink-0 flex-col items-center bg-[#eeeeee] py-[5px]">
            <span className="rotate-180"><Caret /></span>
            <span className="mt-[30px] flex h-[136px] w-[12px] items-center justify-center rounded-sm border border-[#a9a9a9] bg-gradient-to-r from-[#f0f0f0] to-[#cfcfd3]">
              <Ico w={6} h={6} c="#666"><path d="M0 .5h6M0 2.500h6M0 4.500h6" /></Ico>
            </span>
            <span className="flex-1" />
            <Caret />
          </div>
        </div>
        <div className="flex h-[15px] shrink-0 items-center bg-[#eeeeee] pb-[3px] pl-[4px] pr-[18px]">
          <Ico w={3} h={5} c="none"><path d="M3 0v5L0 2.500z" fill="#333" /></Ico>
          <span className="ml-[6px] flex h-[11px] w-[240px] items-center justify-center rounded-sm border border-[#a9a9a9] bg-gradient-to-b from-[#f0f0f0] to-[#cfcfd3]">
            <Ico w={6} h={6} c="#666"><path d="M.5 0v6M2.500 0v6M4.500 0v6" /></Ico>
          </span>
          <span className="flex-1" />
          <Ico w={3} h={5} c="none"><path d="M0 0v5l3-2.500z" fill="#333" /></Ico>
        </div>
      </div>
    </aside>
  );
}

/* ---------- 3D view ---------- */

type FlightProps = { x: number; y: number; dx: number; dy: number; n: number };

// treads of one flight, drawn from the top nosing downwards
function Flight({ x, y, dx, dy, n }: FlightProps) {
  return (
    <>
      {Array.from({ length: n }, (_, i) => {
        const a = x + dx * i;
        const b = y + dy * i;
        return (
          <path
            key={i}
            d={`M${a + 39} ${b + 23}L${a} ${b}L${a + 13} ${b - 6}L${a + 49} ${b + 15}M${a + 38} ${b + 24.5}L${a + 1} ${b + 2}V${b}M${a + 1} ${b + 2}V${b + 10}`}
          />
        );
      })}
    </>
  );
}

function Model() {
  return (
    <svg viewBox="579 131 909 648" preserveAspectRatio="xMidYMid slice" className="absolute inset-0 h-full w-full" fill="none" role="img" aria-label="Assembled stair, 3D view">
      <g stroke="#b4b4b4">
        <path d="M753.500 131V694M1132.500 131V562M1271.500 131V779" />
        <path d="M1133 562L753 694L893 779M1133 562L1488 772" />
      </g>
      <g stroke="#4d4d4d" strokeWidth=".7" fill="#b3b3b3">
        <path d="M1082 198L1093 204L1111 197V183L1103 180z" />
        <path d="M905 146L950 129H1000L1040 147L1052 129H1142L1090 194L1001 226L905 169z" />
        <path d="M905 146L1001 201L1082 173L1120 129M1001 201V226M1082 173L1090 194M912 147L956 130M912 147L1001 198L1080 171M1003 131L1040 149L1053 145L1087 166M1038 150V145M1087 166L1118 130" fill="none" />
        <path d="M1053 145V137L1066 130M1052 135L1092 159M1053 137L1091 161M1065 133L1101 150M1062 130V134M1078 130L1107 144M1042 146L1055 130" fill="none" />

        <path d="M1130 303L1162 288L1258 346V369L1180 397L1172 376L1130 350z" />
        <path d="M1172 376L1258 346M1135 303L1162 292L1254 346L1171 374M1162 288V292" fill="none" />
        <path d="M1117 320L1137 332V345L1125 353L1098 340z" />

        <path d="M905 302L1012 264L1052 285V302L1082 329L1089 351L1001 382L905 325z" />
        <path d="M905 302L1001 358L1082 329M1001 358V382M912 303L1013 268L1050 289M912 303L1001 355L1080 327M1012 264V268M1025 272L1050 287M1043 295L1050 292L1054 297L1047 300z" fill="none" />
        <path d="M1129 193L1131 199L1169 222L1173 219V249L1089 351L1082 329L1052 302V285z" />
        <path d="M1130 195L1054 287V300M1131 199V208L1166 230M1129 193V207M1172 222L1084 328M1167 223L1080 325M1169 222L1172 224M1082 329L1089 351M1054 300L1084 321" fill="none" />
        <g fill="none"><Flight x={1117} y={212} dx={-13} dy={15.7} n={6} /></g>

        <path d="M1130 348L1131 353L1172 377L1180 397L1113 478L1097 484L1050 458V443z" />
        <path d="M1131 349L1053 444V457M1131 353V360L1168 382M1173 377L1097 470V482M1169 377L1093 468V482M1134 350V344L1142 345V349L1133 352" fill="none" />
        <g fill="none"><Flight x={1117} y={369} dx={-13} dy={15.8} n={6} /></g>
      </g>
      <g stroke="#111" strokeWidth=".8" fill="#7f7f7f">
        <path d="M1103 493L1162 471L1258 528V551L1207 569L1198 548L1152 522L1100 492z" />
        <path d="M1198 548L1258 528M1106 495L1162 475L1253 529L1197 547M1162 471V475" fill="none" />
        <path d="M1097 489L1152 522V540L1135 542L1078 511L1097 503z" />
        <path d="M905 458L987 429L1038 460L1052 455L1095 480L1097 482V503L1001 538L905 481z" />
        <path d="M905 458L1001 513L1097 482M1001 513V538M911 458L987 433L1038 462L1052 457M911 458L1001 511L1094 480M987 429V433" fill="none" />
        <path d="M1008 442L1034 457" strokeWidth="1.600" fill="none" />
        <path d="M1146 520L1153 522L1198 548L1207 569L1088 718L1070 725L1023 698V685L1146 536z" />
        <path d="M1146 520V536L1149 532M1153 522V540M1150 529L1026 686V698M1155 529L1194 552M1198 548L1070 709V725M1195 547L1067 707V723M1026 689L1067 713M1026 698L1067 722" fill="none" />
        <g fill="none"><Flight x={1142} y={543} dx={-12.8} dy={16} n={10} /></g>
      </g>
      <path d="M1132.500 455V562" stroke="#c8c8c8" strokeWidth=".8" />
      <path d="M1133 562L1172 585" stroke="#333" strokeDasharray="1 2" />
      <path d="M1130 508L1155 499L1203 527L1176 537L1047 699" stroke="#20208c" />
    </svg>
  );
}

function ViewCube() {
  return (
    <svg width="112" height="84" viewBox="1358 193 112 84" fill="none" className="absolute right-[18px] top-[62px]" aria-label="View cube">
      <defs>
        <radialGradient id="cubeShadow"><stop offset="0" stopColor="#888" /><stop offset="1" stopColor="#fff" stopOpacity="0" /></radialGradient>
      </defs>
      <ellipse cx="1415" cy="245" rx="50" ry="28" fill="#f1f1f1" stroke="#c4c4c4" strokeDasharray="4 1" />
      <ellipse cx="1415" cy="241" rx="39" ry="23" fill="#fff" stroke="#cfcfcf" />
      <ellipse cx="1410" cy="246" rx="30" ry="15" fill="url(#cubeShadow)" />
      <g stroke="#8c8c8c" strokeWidth=".8">
        <path d="M1388 206L1418 197L1442 208L1411 218z" fill="#fafafa" />
        <path d="M1388 206L1411 218V254L1390 242z" fill="#eaeaea" />
        <path d="M1411 218L1442 208L1441 242L1411 254z" fill="#f3f3f3" />
      </g>
      <g fill="#9a9a9a" fontFamily="Open Sans, sans-serif" fontWeight="600">
        <text x="1409" y="211" fontSize="6" transform="rotate(-14 1409 211)">TOP</text>
        <text x="1394" y="230" fontSize="6" transform="rotate(24 1394 230)">LEFT</text>
        <text x="1416" y="238" fontSize="7" transform="rotate(-17 1416 238)">FRONT</text>
        <text x="1362" y="256" fontSize="12" fill="#fff" stroke="#a5a5a5" strokeWidth=".7" transform="rotate(-15 1362 256)">W</text>
        <text x="1430" y="272" fontSize="12" fill="#fff" stroke="#a5a5a5" strokeWidth=".7" transform="rotate(12 1430 272)">S</text>
        <text x="1449" y="240" fontSize="11" fill="#fff" stroke="#a5a5a5" strokeWidth=".7" transform="rotate(-60 1455 236)">E</text>
      </g>
    </svg>
  );
}

function NavBar() {
  return (
    <div className="absolute right-[3px] top-[156px] flex h-[91px] w-[27px] flex-col items-center rounded-md border-2 border-[#b3b3b3] bg-[#f7f7f7]">
      <span className="mr-[1px] mt-[1px] h-[6px] w-[6px] self-end rounded-full border border-[#aaa]" />
      <IconButton label="Steering wheel" className="mt-[7px]">
        <Ico w={18} h={18} c="#8d939c"><path d="M9 1h7v8a8 8 0 1 1-7-8z" fill="#e6e9f0" /><circle cx="8.500" cy="9.500" r="5" fill="#fff" /><circle cx="8.500" cy="9.500" r="3.500" fill="#e6e9f0" /></Ico>
      </IconButton>
      <span className="mt-[6px]"><Caret c="#999" /></span>
      <span className="my-[3px] h-px w-[21px] bg-[#c4c4c4]" />
      <IconButton label="Zoom" className="mt-[2px]">
        <Ico w={14} h={14} c="#8d939c"><path d="M1 1h8v8H1z" fill="#a9cf9b" stroke="#7fae70" /><circle cx="8.500" cy="8.500" r="3" fill="#fff" /><path d="M10.500 10.500l2.500 3" strokeWidth="1.500" /></Ico>
      </IconButton>
      <span className="mt-[6px]"><Caret c="#999" /></span>
      <span className="mb-[1px] mr-[1px] mt-auto h-[6px] w-[6px] self-end rounded-full border border-[#aaa]" />
    </div>
  );
}

function ViewControlBar() {
  const y = "#e0a92a";
  const redX = <path d="M7 6l5 5M12 6l-5 5" stroke="#d22" strokeWidth="2" />;
  return (
    <div className="flex h-[16px] shrink-0 items-center gap-[3px] bg-[#efefef] pb-[3px] pl-[19px] text-[#1c1c1c]">
      <button type="button" className="mr-[12px]">1 : 100</button>
      <IconButton label="Detail level"><Ico w={13} h={11} c="#555"><path d="M.5.500h12v9H.5z" /><path d="M1 4l3-3M1 8l7-7M4 9l8-8M8 9l4-4M5 1l7 7M1 2l7 7" strokeWidth=".7" /></Ico></IconButton>
      <IconButton label="Visual style"><Ico w={13} h={11} c="#27669f"><path d="M1 4l3-3h8v5L9 10H1zM1 4h8v6M9 4l3-3" fill="#8cc3ec" /></Ico></IconButton>
      <IconButton label="Sun path off"><Ico w={13} h={12} c={y}><circle cx="6" cy="5" r="3" fill="#fdf0b8" /><path d="M6 0v1M1 5h1M2.500 1.500l1 1M9.500 1.500l-1 1M3 8l-1 1" />{redX}</Ico></IconButton>
      <IconButton label="Shadows off"><Ico w={13} h={12} c={BLUE}><circle cx="5.500" cy="4.500" r="3.500" fill="#e6f1fb" /><path d="M1 10h5" />{redX}</Ico></IconButton>
      <IconButton label="Rendering dialog"><Ico w={13} h={11} c="#555"><path d="M1 3h3l3-2M2 4c0 4 3 5 5 5M4 3l4 2" /><circle cx="9.500" cy="5.500" r="2.500" fill="#cfe3f6" stroke={BLUE} /><path d="M9.500 8v2" /></Ico></IconButton>
      <IconButton label="Crop view"><Ico w={13} h={12} c={BLUE}><path d="M3 0v9h9M0 4h9v7M1 7h5" strokeWidth="1.500" />{redX}</Ico></IconButton>
      <IconButton label="Show crop region"><Ico w={13} h={11} c={BLUE}><path d="M3 0v8h5M0 4h8v6" strokeWidth="1.500" /><circle cx="10" cy="4" r="2" fill="#cfe3f6" /></Ico></IconButton>
      <IconButton label="Lock 3D view"><Ico w={14} h={12} c="#333"><path d="M1 5l4-4 5 3M2 5v5h4" fill="#fff" /><path d="M6 6h6v5H6zM7.500 6V4.500h3V6" fill="#eee" /></Ico></IconButton>
      <IconButton label="Temporary hide"><Ico w={14} h={9} c="#444" sw={1.1}><path d="M1 1l3 5c1 2 3 1 3-1 0 2 3 3 3.500 1L13 2M4 5c1-2 3-1 3 0s3-2 4-1" /></Ico></IconButton>
      <IconButton label="Reveal hidden elements" className="w-[14px]"><Ico w={7} h={11} c={BLUE}><circle cx="3.500" cy="3.500" r="2.500" fill="#e6f1fb" /><path d="M2.500 7.500h2M2.500 9.500h2" /></Ico></IconButton>
      <IconButton label="Worksharing display off"><Ico w={13} h={12} c="#3a7a6a"><circle cx="4" cy="6" r="3" fill="#bfe3d0" /><circle cx="7.500" cy="4" r="3" fill="#cfe3f6" />{redX}</Ico></IconButton>
      <IconButton label="Reveal constraints"><Ico w={13} h={11} c="#333"><path d="M1 2h10v7H1z" strokeDasharray="2 1" strokeWidth="1.500" /><path d="M5 5l5 5" /></Ico></IconButton>
      <IconButton label="Temporary view properties"><Ico w={13} h={12} c="#555"><path d="M1 4l3-2h5v6H1z" fill="#ddd" /><path d="M3 5h6v5H3z" fill="#e08b7b" stroke="#a33" /><circle cx="10" cy="3" r="2.500" fill="#f8d34a" stroke={y} /></Ico></IconButton>
      <IconButton label="Analytical model"><Ico w={14} h={11} c="#aaa"><path d="M1 4l3-3h8v5l-3 4H1zM1 4h7v6M5 1v3" fill="#e4e4e4" /></Ico></IconButton>
      <span className="ml-[3px]"><Ico w={3} h={5} c="none"><path d="M3 0v5L0 2.500z" fill="#222" /></Ico></span>
      <div className="flex flex-1 justify-center">
        <span className="h-[12px] w-[12px] border border-[#b0b0b0] bg-gradient-to-b from-[#ececec] to-[#c9c9c9]" />
      </div>
      <span className="mr-[6px]"><Ico w={3} h={6} c="none"><path d="M0 0v6l3-3z" fill="#222" /></Ico></span>
    </div>
  );
}

function ViewPane() {
  return (
    <main className="ml-[4px] flex min-w-0 flex-1 border-l border-t border-[#66736e]">
      <div className="flex min-w-0 flex-1 flex-col">
        <div className="relative min-h-0 flex-1 overflow-hidden bg-white">
          <Model />
          <div className="absolute right-[5px] top-[6px] flex items-center gap-[4px] text-[#555]">
            <IconButton label="Minimize view"><Ico w={10} h={10} c="#555"><path d="M.5 6.500h9v2h-9z" /></Ico></IconButton>
            <IconButton label="Restore view"><Ico w={10} h={10} c="#555"><path d="M3 1h6v6H3zM1 3h6v6H1z" fill="#fff" /></Ico></IconButton>
            <IconButton label="Close view"><Ico w={10} h={10} c="#555"><path d="M1 1h2.500L5 3l1.500-2H9v2L7 5l2 2v2H6.500L5 7 3.500 9H1V7l2-2-2-2z" /></Ico></IconButton>
          </div>
          <ViewCube />
          <NavBar />
        </div>
        <ViewControlBar />
      </div>
      <div className="flex w-[12px] shrink-0 flex-col items-center bg-[#efefef] pb-[21px] pt-[5px]">
        <span className="rotate-180"><Caret /></span>
        <span className="my-auto h-[12px] w-[11px] border border-[#b0b0b0] bg-gradient-to-b from-[#f2f2f2] to-[#cccccc]" />
        <Caret />
      </div>
    </main>
  );
}

/* ---------- status bar ---------- */

function StatusSelect({ label, value, className }: { label: string; value: string; className: string }) {
  return (
    <div className={clsx("relative", className)}>
      <select aria-label={label} className="h-[14px] w-full appearance-none bg-white pl-[2px] text-black">
        <option>{value}</option>
      </select>
      <span className="pointer-events-none absolute right-[4px] top-[6px]"><Caret c="#111" /></span>
    </div>
  );
}

function Tick({ label, initial }: { label: string; initial: boolean }) {
  const [on, setOn] = useState(initial);
  return (
    <label className="flex items-center gap-[3px]">
      <span className="relative flex">
        <input type="checkbox" checked={on} onChange={() => setOn(!on)} className="h-[11px] w-[11px] appearance-none border border-[#555] bg-[#f6f6f6]" />
        {on && <span className="pointer-events-none absolute left-[2px] top-[2px]"><Ico w={8} h={7} c="#1f8a1f" sw={1.8}><path d="M1 3l2 3 4-5" /></Ico></span>}
      </span>
      {label}
    </label>
  );
}

function StatusBar() {
  const cursor = <path d="M7 4v8l2-2 1.500 3 1-.5L10 9.500h2.500z" fill="#fff" stroke="#333" strokeWidth=".8" />;
  return (
    <footer className="flex h-[16px] shrink-0 items-center border-t border-[#8f8f8f] bg-gradient-to-b from-[#d9d9d9] to-[#bcbcbc] pl-[2px] text-[#1c1c1c]">
      <p className="flex-1">Click to select, TAB for alternates, CTRL adds, SHIFT unselects.</p>
      <IconButton label="Worksets" className="mr-[4px]"><Ico w={13} h={12} c="#888"><path d="M2 4h3v7H2zM7 5h4v6H7zM3 4V2l3-1M7 5V3l3-1" fill="#c9c9c9" /></Ico></IconButton>
      <StatusSelect label="Active workset" value="ARCHITECTURAL (Not Editable)" className="w-[161px]" />
      <button type="button" className="ml-[7px] flex w-[40px] items-center gap-[2px]"><Ico w={13} h={12} c="#444"><path d="M3 1h9l-1 3-4 1-1 2H3l1-3H2zM2 9h5v2H2M7 7v3" fill="#eee" /></Ico>:0</button>
      <IconButton label="Design options" className="mr-[7px]"><Ico w={13} h={12} c="#888"><rect x=".5" y=".5" width="12" height="11" rx="1" fill="#999" /></Ico></IconButton>
      <IconButton label="Pick option" className="mr-[5px]"><Ico w={13} h={12} c="#888"><path d="M1 1h11v10H1z" fill="#aaa" /><path d="M3 9l4-4v4M7 5h3v4" stroke="#666" /></Ico></IconButton>
      <StatusSelect label="Active design option" value="Main Model" className="w-[122px]" />
      <div className="ml-[8px] flex items-center gap-[11px]">
        <Tick label="Exclude Options" initial />
        <Tick label="Editable Only" initial={false} />
      </div>
      <div className="ml-[7px] mr-[49px] flex items-center gap-[7px]">
        <IconButton label="Select links"><Ico w={13} h={13} c="#b8871a" sw={1.5}><path d="M1 2h4v3H2zM7 2h5l-1 3H7zM4 3.500h5" />{cursor}</Ico></IconButton>
        <IconButton label="Select underlay"><Ico w={13} h={13} c={BLUE} sw={1.3}><path d="M1 7l4-5h7M1 7h10M1 10h7M5 2v5" />{cursor}</Ico></IconButton>
        <IconButton label="Select pinned"><Ico w={13} h={13} c="#c0561e" sw={1.3}><path d="M2 1h7M3 1v4h5V1M1 6h8M5 6v5" fill="#f0a070" />{cursor}</Ico></IconButton>
        <IconButton label="Select by face"><Ico w={13} h={13} c={BLUE} sw={1.3}><path d="M1 3l5-2v9l-5 2z" fill="#cfe3f6" /><path d="M8 1l4 4M12 1L8 5" stroke="#d22" strokeWidth="1.600" />{cursor}</Ico></IconButton>
        <IconButton label="Drag on selection"><Ico w={13} h={13} c="#222" sw={1.3}><path d="M5 1v8M1 5h8M4 2l1-1 1 1M2 4L1 5l1 1M4 8l1 1" />{cursor}</Ico></IconButton>
        <button type="button" className="flex items-center gap-px"><Ico w={13} h={12} c="#444"><path d="M1 1h11L8 6v5l-3-1.500V6z" fill="#eee" /></Ico>:0</button>
      </div>
    </footer>
  );
}

export default function App() {
  const [tab, setTab] = useState("Modify | Create Stair");
  return (
    <div className="flex h-screen flex-col overflow-hidden bg-[#f0f0f0] font-['Open_Sans','Noto_Sans',sans-serif] text-[9px] leading-[14px]">
      <header className="shrink-0">
        <div className="flex bg-[#9d9d9d]">
          <IconButton label="Application menu" className="h-[32px] w-[32px] gap-[2px] border border-[#222] bg-gradient-to-b from-[#b5b5b5] to-[#858585]">
            <Ico w={19} h={22} c="none">
              <path d="M4 4L12 0l4 3-3 7-5 2z" fill="#1b3d8f" />
              <path d="M4 4l4-1-1 10-2 7-5-2z" fill="#2456ae" />
              <path d="M7 10l5-1 6 8-4 2-7-7z" fill="#10265e" />
              <path d="M8 4l4-2 1 3-5 4z" fill="#4a7fd0" />
            </Ico>
            <Caret />
          </IconButton>
          <div className="min-w-0 flex-1">
            <TitleBar />
            <TabBar active={tab} onSelect={setTab} />
          </div>
        </div>
        <Ribbon />
        <div className="flex h-[21px] items-center bg-[#d0e2db] pl-[7px] text-[#a9b5b0]">Modify | Create Stair</div>
      </header>
      <div className="flex min-h-0 flex-1">
        <PropertiesPane />
        <BrowserPane />
        <ViewPane />
      </div>
      <StatusBar />
    </div>
  );
}
